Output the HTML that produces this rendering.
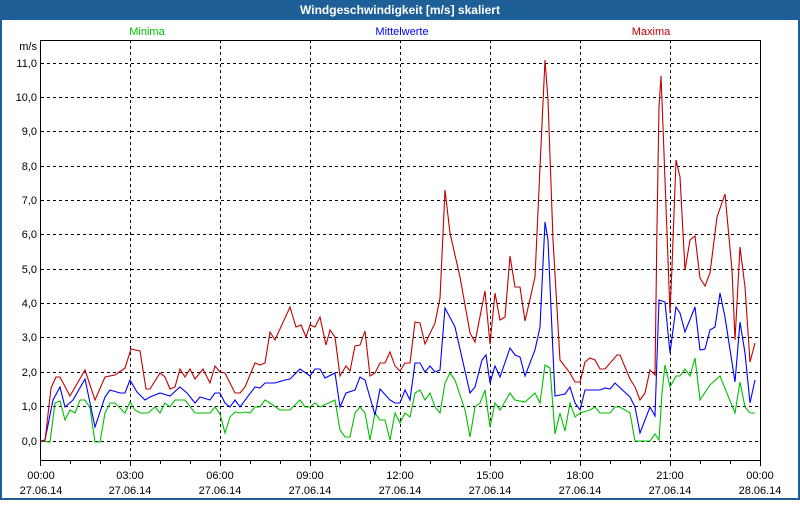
<!DOCTYPE html>
<html><head><meta charset="utf-8"><style>
html,body{margin:0;padding:0;background:#fff;}
body{width:800px;height:500px;overflow:hidden;}
svg text{font-family:"Liberation Sans",sans-serif;font-size:11px;}
</style></head><body>
<svg width="800" height="500" xmlns="http://www.w3.org/2000/svg" shape-rendering="crispEdges">
<rect x="0" y="0" width="800" height="500" fill="#1e5f97"/>
<rect x="2" y="20" width="796" height="478" fill="#fff"/>
<text x="400" y="14" fill="#fff" font-weight="bold" text-anchor="middle" style="font-size:12px">Windgeschwindigkeit [m/s] skaliert</text>
<text x="147" y="35" fill="#00c000" text-anchor="middle">Minima</text>
<text x="402" y="35" fill="#0000ff" text-anchor="middle">Mittelwerte</text>
<text x="651" y="35" fill="#c00000" text-anchor="middle">Maxima</text>
<g stroke="#000" stroke-width="1" stroke-dasharray="3,3">
<line x1="41" x2="760" y1="441.5" y2="441.5"/><line x1="41" x2="760" y1="406.5" y2="406.5"/><line x1="41" x2="760" y1="372.5" y2="372.5"/><line x1="41" x2="760" y1="337.5" y2="337.5"/><line x1="41" x2="760" y1="303.5" y2="303.5"/><line x1="41" x2="760" y1="269.5" y2="269.5"/><line x1="41" x2="760" y1="234.5" y2="234.5"/><line x1="41" x2="760" y1="200.5" y2="200.5"/><line x1="41" x2="760" y1="166.5" y2="166.5"/><line x1="41" x2="760" y1="131.5" y2="131.5"/><line x1="41" x2="760" y1="97.5" y2="97.5"/><line x1="41" x2="760" y1="63.5" y2="63.5"/>
<line y1="40" y2="460" x1="130.5" x2="130.5"/><line y1="40" y2="460" x1="220.5" x2="220.5"/><line y1="40" y2="460" x1="310.5" x2="310.5"/><line y1="40" y2="460" x1="400.5" x2="400.5"/><line y1="40" y2="460" x1="490.5" x2="490.5"/><line y1="40" y2="460" x1="580.5" x2="580.5"/><line y1="40" y2="460" x1="670.5" x2="670.5"/>
</g>
<g stroke="#000" stroke-width="1">
<path d="M40.5 461v5M70.5 461v3M100.5 461v3M130.5 461v5M160.5 461v3M190.5 461v3M220.5 461v5M250.5 461v3M280.5 461v3M310.5 461v5M340.5 461v3M370.5 461v3M400.5 461v5M430.5 461v3M460.5 461v3M490.5 461v5M520.5 461v3M550.5 461v3M580.5 461v5M610.5 461v3M640.5 461v3M670.5 461v5M700.5 461v3M730.5 461v3M760.5 461v5"/>
</g>
<rect x="40.5" y="40.5" width="720" height="420" fill="none" stroke="#000" stroke-width="1"/>
<g shape-rendering="auto" fill="none" stroke-width="1.1">
<polyline stroke="#00c000" points="41,441 50,442 55,403 60,401 65,420 70,410 75,413 80,400 85,400 90,408 95,442 100,442 105,413 110,403 115,403 125,413 130,402 135,410 140,413 148,413 155,407 160,413 165,403 170,407 175,400 185,400 195,413 210,413 215,407 220,414 225,433 230,417 235,412 240,413 245,412 250,413 255,407 260,407 265,400 270,403 280,410 290,410 300,400 305,407 310,407 315,403 320,407 335,400 340,430 345,437 350,437 355,413 360,407 365,413 370,440 375,413 380,420 385,420 390,440 395,413 400,423 405,413 410,417 415,393 420,390 425,400 430,393 435,407 440,413 445,383 450,373 455,380 465,410 470,437 475,407 480,403 485,390 490,427 495,403 500,410 510,393 515,400 525,402 535,393 540,403 545,365 550,368 555,434 560,413 565,431 570,403 575,417 580,413 590,410 595,407 600,413 610,413 615,407 620,407 630,413 635,441 650,441 655,434 659,440 662,393 665,365 670,387 676,376 680,376 685,369 690,376 695,358 700,400 710,385 720,376 735,413 740,382 745,407 750,413 755,413"/>
<polyline stroke="#0000ff" points="41,441 45,440 53,400 60,387 65,407 73,400 85,379 95,427 105,397 110,390 120,393 125,393 130,380 137,392 145,400 150,397 160,393 170,396 180,387 187,393 195,403 200,397 210,400 215,393 220,393 225,403 230,407 235,400 240,407 255,387 260,388 265,383 275,383 285,380 290,379 300,369 310,376 315,369 320,369 325,378 335,373 340,407 346,393 355,390 360,377 365,380 375,415 380,389 390,400 395,403 400,403 405,390 410,400 415,363 420,363 425,372 430,366 435,372 440,370 445,308 455,327 470,393 475,387 482,360 486,355 490,383 495,366 500,377 510,348 515,355 520,357 525,376 535,350 540,327 545,222 548,240 553,353 555,396 565,394 570,387 575,403 580,410 585,390 600,390 605,388 610,389 615,383 630,397 635,407 640,433 650,407 655,416 659,300 665,302 670,353 676,307 680,313 685,332 695,307 700,350 705,349 710,330 715,327 720,293 725,317 735,382 740,322 745,353 750,403 755,380"/>
<polyline stroke="#c00000" points="41,441 45,441 51,388 56,377 60,377 70,396 85,370 95,400 105,377 115,375 125,368 131,349 140,351 146,389 150,389 160,373 165,377 170,389 175,387 180,369 185,377 190,369 195,379 203,369 210,383 215,366 220,372 225,373 235,393 240,393 245,387 255,363 260,365 265,363 270,332 275,340 290,307 296,327 301,325 306,337 310,325 315,327 320,317 326,345 330,330 335,337 340,376 346,366 350,371 355,346 360,345 365,331 370,376 375,373 380,363 385,363 390,352 395,366 400,371 405,363 410,363 415,322 420,323 425,344 435,323 440,298 445,190 450,233 460,277 470,333 475,342 485,291 490,344 495,293 500,320 505,317 510,256 515,287 520,287 525,321 535,277 540,167 545,60 548,100 553,240 560,360 570,373 575,382 580,382 585,362 590,358 595,360 600,369 605,369 617,355 620,355 630,379 635,387 640,400 645,393 650,370 655,375 657,227 659,107 661,76 663,127 670,313 672,267 676,160 680,177 685,270 690,240 695,236 700,278 705,286 710,273 717,217 725,194 732,270 735,340 740,247 745,287 750,362 755,343"/>
</g>
<g fill="#000" text-anchor="end">
<text x="37" y="50">m/s</text>
<text x="37" y="67">11,0</text><text x="37" y="101">10,0</text><text x="37" y="135">9,0</text><text x="37" y="170">8,0</text><text x="37" y="204">7,0</text><text x="37" y="238">6,0</text><text x="37" y="273">5,0</text><text x="37" y="307">4,0</text><text x="37" y="341">3,0</text><text x="37" y="376">2,0</text><text x="37" y="410">1,0</text><text x="37" y="445">0,0</text>
</g>
<g fill="#000" text-anchor="middle">
<text x="41" y="479">00:00</text><text x="41" y="494">27.06.14</text>
<text x="130" y="479">03:00</text><text x="130" y="494">27.06.14</text>
<text x="220" y="479">06:00</text><text x="220" y="494">27.06.14</text>
<text x="310" y="479">09:00</text><text x="310" y="494">27.06.14</text>
<text x="400" y="479">12:00</text><text x="400" y="494">27.06.14</text>
<text x="490" y="479">15:00</text><text x="490" y="494">27.06.14</text>
<text x="580" y="479">18:00</text><text x="580" y="494">27.06.14</text>
<text x="670" y="479">21:00</text><text x="670" y="494">27.06.14</text>
<text x="760" y="479">00:00</text><text x="760" y="494">28.06.14</text>
</g>
</svg>
</body></html>
